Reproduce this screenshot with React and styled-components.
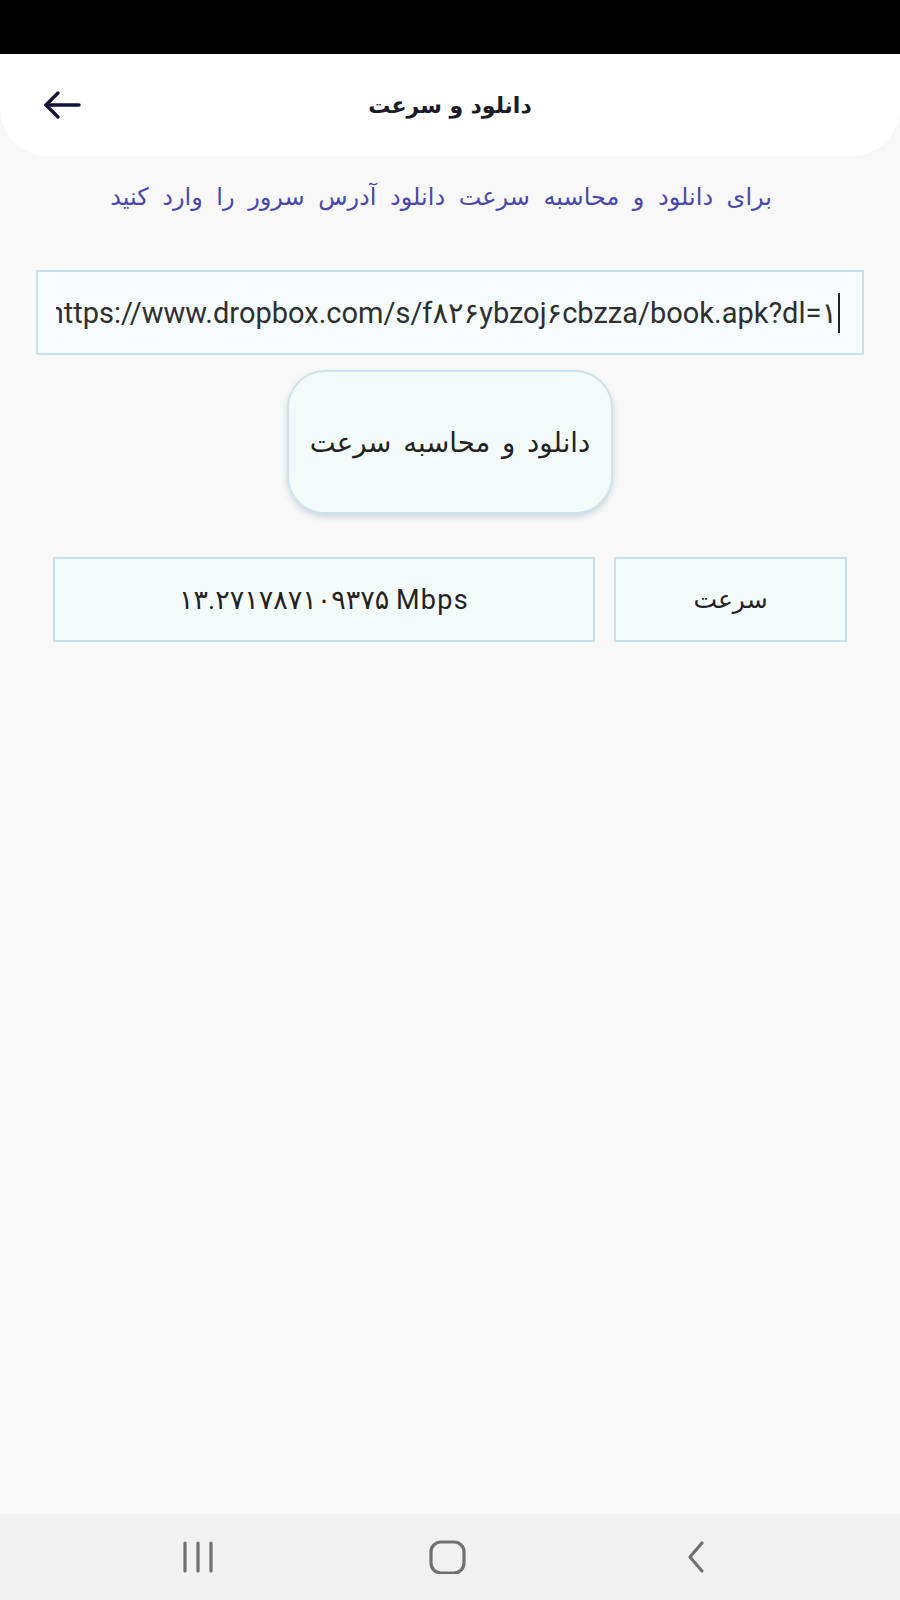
import styled, { createGlobalStyle } from 'styled-components'

const Global = createGlobalStyle`
  html, body { margin: 0; padding: 0; background: #f8f8f8; }
  body { font-family: Roboto, "DejaVu Sans", sans-serif; }
`

const Screen = styled.div`
  width: 900px;
  height: 1600px;
  display: flex;
  flex-direction: column;
  background: #f8f8f8;
  overflow: hidden;
`

const StatusBar = styled.div`
  height: 54px;
  background: #000;
  flex-shrink: 0;
`

const Header = styled.header`
  height: 102px;
  background: #fff;
  border-radius: 0 0 48px 48px;
  display: grid;
  grid-template-columns: 120px 1fr 120px;
  align-items: center;
  padding: 0 0 0 43px;
  flex-shrink: 0;
`

const BackBtn = styled.button`
  width: 38px;
  height: 38px;
  padding: 0;
  border: none;
  background: none;
  display: flex;
  align-items: center;
  justify-content: center;
  color: #14123a;
`

const Title = styled.h1`
  margin: 0;
  text-align: center;
  font-size: 22px;
  font-weight: 700;
  color: #1b1b2a;
  direction: rtl;
  padding-right: 43px;
  word-spacing: 2px;
`

const Main = styled.main`
  flex: 1;
  display: flex;
  flex-direction: column;
  direction: rtl;
`

const Hint = styled.p`
  margin: 24px 128px 0 100px;
  font-size: 24px;
  line-height: 34px;
  word-spacing: 7.6px;
  color: #4a48a8;
  text-align: right;
  white-space: nowrap;
`

const Field = styled.div`
  margin: 56px 36px 0 36px;
  height: 85px;
  box-sizing: border-box;
  border: 2px solid #c9e1ec;
  background: #f6fbfd;
  display: flex;
  align-items: center;
  padding: 0 22px 0 18px;
  direction: ltr;
`

const Scroller = styled.div`
  flex: 1;
  min-width: 0;
  display: flex;
  align-items: center;
  justify-content: flex-end;
  overflow: hidden;
`

const FieldText = styled.span`
  white-space: nowrap;
  font-size: 29px;
  color: #2f2f2f;
  flex-shrink: 0;
`

const Caret = styled.span`
  width: 2px;
  height: 40px;
  background: #222;
  margin-left: 1px;
  flex-shrink: 0;
`

const ActionBtn = styled.button`
  align-self: center;
  margin-top: 15px;
  width: 326px;
  height: 144px;
  border-radius: 38px;
  border: 2px solid #cde3ec;
  background: #f3fafa;
  box-shadow: 0 3px 6px rgba(120, 150, 170, 0.35);
  font-family: inherit;
  font-size: 27.5px;
  word-spacing: 5px;
  color: #222;
  direction: rtl;
  padding: 0;
`

const ResultRow = styled.div`
  margin: 43px 53px 0 53px;
  display: flex;
  gap: 19px;
`

const Cell = styled.div`
  height: 85px;
  box-sizing: border-box;
  border: 2px solid #c9e1ec;
  background: #f4fbfb;
  display: flex;
  align-items: center;
  justify-content: center;
  font-size: ${p => (p.$wide ? '27px' : '25px')};
  letter-spacing: ${p => (p.$wide ? '1.3px' : '0')};
  direction: ${p => (p.$wide ? 'ltr' : 'rtl')};
  color: #222;
  flex: ${p => (p.$wide ? '1' : '0 0 233px')};
`

const NavBar = styled.nav`
  height: 86px;
  background: #f1f1f1;
  display: flex;
  align-items: center;
  justify-content: space-between;
  padding: 0 182px 0 178px;
  flex-shrink: 0;
`

const NavIcon = styled.svg`
  display: block;
  color: #707070;
`

export default function App() {
  return (
    <Screen>
      <Global />
      <StatusBar />
      <Header>
        <BackBtn aria-label="back">
          <svg width="38" height="32" viewBox="0 0 38 32" fill="none" stroke="currentColor" strokeWidth="3.4" strokeLinecap="round" strokeLinejoin="round">
            <path d="M36 16H3" />
            <path d="M15 4L3 16l12 12" />
          </svg>
        </BackBtn>
        <Title>دانلود و سرعت</Title>
        <span />
      </Header>
      <Main>
        <Hint>برای دانلود و محاسبه سرعت دانلود آدرس سرور را وارد کنید</Hint>
        <Field>
          <Scroller>
            <FieldText>https://www.dropbox.com/s/f۸۲۶ybzoj۶cbzza/book.apk?dl=۱</FieldText>
            <Caret />
          </Scroller>
        </Field>
        <ActionBtn>دانلود و محاسبه سرعت</ActionBtn>
        <ResultRow>
          <Cell>سرعت</Cell>
          <Cell $wide>۱۳.۲۷۱۷۸۷۱۰۹۳۷۵ Mbps</Cell>
        </ResultRow>
      </Main>
      <NavBar>
        <NavIcon width="40" height="34" viewBox="0 0 40 34" fill="none" stroke="currentColor" strokeWidth="3.2" strokeLinecap="round">
          <path d="M7 3v28M20 3v28M33 3v28" />
        </NavIcon>
        <NavIcon width="40" height="34" viewBox="0 0 40 34" fill="none" stroke="currentColor" strokeWidth="3.2">
          <rect x="3" y="2" width="33" height="31" rx="10" />
        </NavIcon>
        <NavIcon width="40" height="34" viewBox="0 0 40 34" fill="none" stroke="currentColor" strokeWidth="3.2" strokeLinecap="round" strokeLinejoin="round">
          <path d="M24 3L12 17l12 14" />
        </NavIcon>
      </NavBar>
    </Screen>
  )
}
